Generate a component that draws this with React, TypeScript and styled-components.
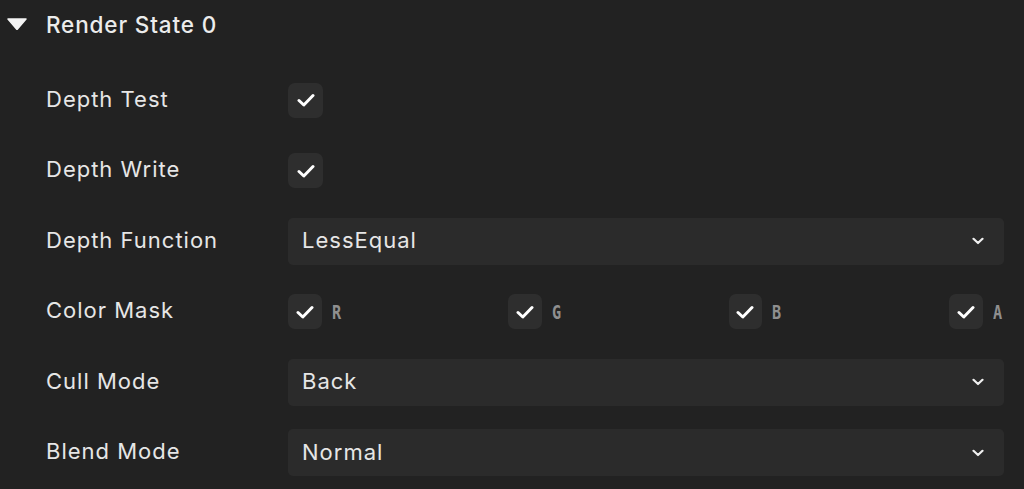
import React from "react";
import styled, { createGlobalStyle } from "styled-components";

const Global = createGlobalStyle`
  html, body { margin: 0; padding: 0; background: #222222; }
  body { font-family: Inter, "Noto Sans", "Liberation Sans", sans-serif; color: #e4e4e4; }
  * { box-sizing: border-box; }
`;

const Panel = styled.div`
  width: 1024px;
  height: 489px;
  background: #222222;
  overflow: hidden;
`;

const Header = styled.div`
  height: 48px;
  display: flex;
  align-items: center;
  padding-left: 7px;
  gap: 19px;
  font-size: 22.5px;
  font-weight: 500;
  letter-spacing: 0.85px;
  color: #ececec;
`;

const Rows = styled.div`
  padding: 17px 20px 0 46px;
  display: flex;
  flex-direction: column;
`;

const Row = styled.div`
  height: 70.5px;
  display: grid;
  grid-template-columns: 242px 1fr;
  align-items: center;
`;

const Label = styled.div`
  font-size: 22px;
  font-weight: 400;
  color: #e6e6e6;
  letter-spacing: 1px;
  padding-bottom: 3px;
`;

const Box = styled.div`
  width: 35px;
  height: 35px;
  border-radius: 7px;
  background: #2e2e2e;
  display: flex;
  align-items: center;
  justify-content: center;
`;

const Select = styled.div`
  height: 47px;
  border-radius: 5px;
  background: #2b2b2b;
  display: flex;
  align-items: center;
  justify-content: space-between;
  padding: 0 20px 0 14px;
  font-size: 22px;
  font-weight: 400;
  letter-spacing: 1px;
  color: #e6e6e6;
`;

const SelectValue = styled.span`
  padding-bottom: 2px;
`;

const MaskGroup = styled.div`
  display: flex;
  justify-content: space-between;
  align-items: center;
`;

const MaskItem = styled.div`
  display: flex;
  align-items: center;
  gap: 10px;
  width: 55px;
`;

const MaskLetter = styled.span`
  font-family: "DejaVu Sans Mono", "Liberation Mono", monospace;
  font-size: 19px;
  font-weight: 700;
  color: #8f8f8f;
  transform: scaleX(0.8);
  transform-origin: left center;
`;

const Check = () => (
  <svg width="18" height="14" viewBox="0 0 18 14" fill="none">
    <path d="M2 7.5 L6.8 12 L16 2.5" stroke="#ffffff" strokeWidth="3" strokeLinecap="round" strokeLinejoin="round" />
  </svg>
);

const Chevron = () => (
  <svg width="12" height="8" viewBox="0 0 12 8" fill="none">
    <path d="M1.5 1.8 L6 6 L10.5 1.8" stroke="#f0f0f0" strokeWidth="2.2" strokeLinecap="round" strokeLinejoin="round" />
  </svg>
);

const Triangle = () => (
  <svg width="20" height="12" viewBox="0 0 20 12">
    <path d="M1 1 L19 1 L10 11.5 Z" fill="#f4f4f4" stroke="#f4f4f4" strokeWidth="1.5" strokeLinejoin="round" />
  </svg>
);

const CheckBox = () => (
  <Box>
    <Check />
  </Box>
);

const Dropdown = ({ value }: { value: string }) => (
  <Select>
    <SelectValue>{value}</SelectValue>
    <Chevron />
  </Select>
);

export default function App() {
  return (
    <>
      <Global />
      <Panel>
        <Header>
          <Triangle />
          <span>Render State 0</span>
        </Header>
        <Rows>
          <Row>
            <Label>Depth Test</Label>
            <CheckBox />
          </Row>
          <Row>
            <Label>Depth Write</Label>
            <CheckBox />
          </Row>
          <Row>
            <Label>Depth Function</Label>
            <Dropdown value="LessEqual" />
          </Row>
          <Row>
            <Label>Color Mask</Label>
            <MaskGroup>
              {["R", "G", "B", "A"].map((c) => (
                <MaskItem key={c}>
                  <CheckBox />
                  <MaskLetter>{c}</MaskLetter>
                </MaskItem>
              ))}
            </MaskGroup>
          </Row>
          <Row>
            <Label>Cull Mode</Label>
            <Dropdown value="Back" />
          </Row>
          <Row>
            <Label>Blend Mode</Label>
            <Dropdown value="Normal" />
          </Row>
        </Rows>
      </Panel>
    </>
  );
}
